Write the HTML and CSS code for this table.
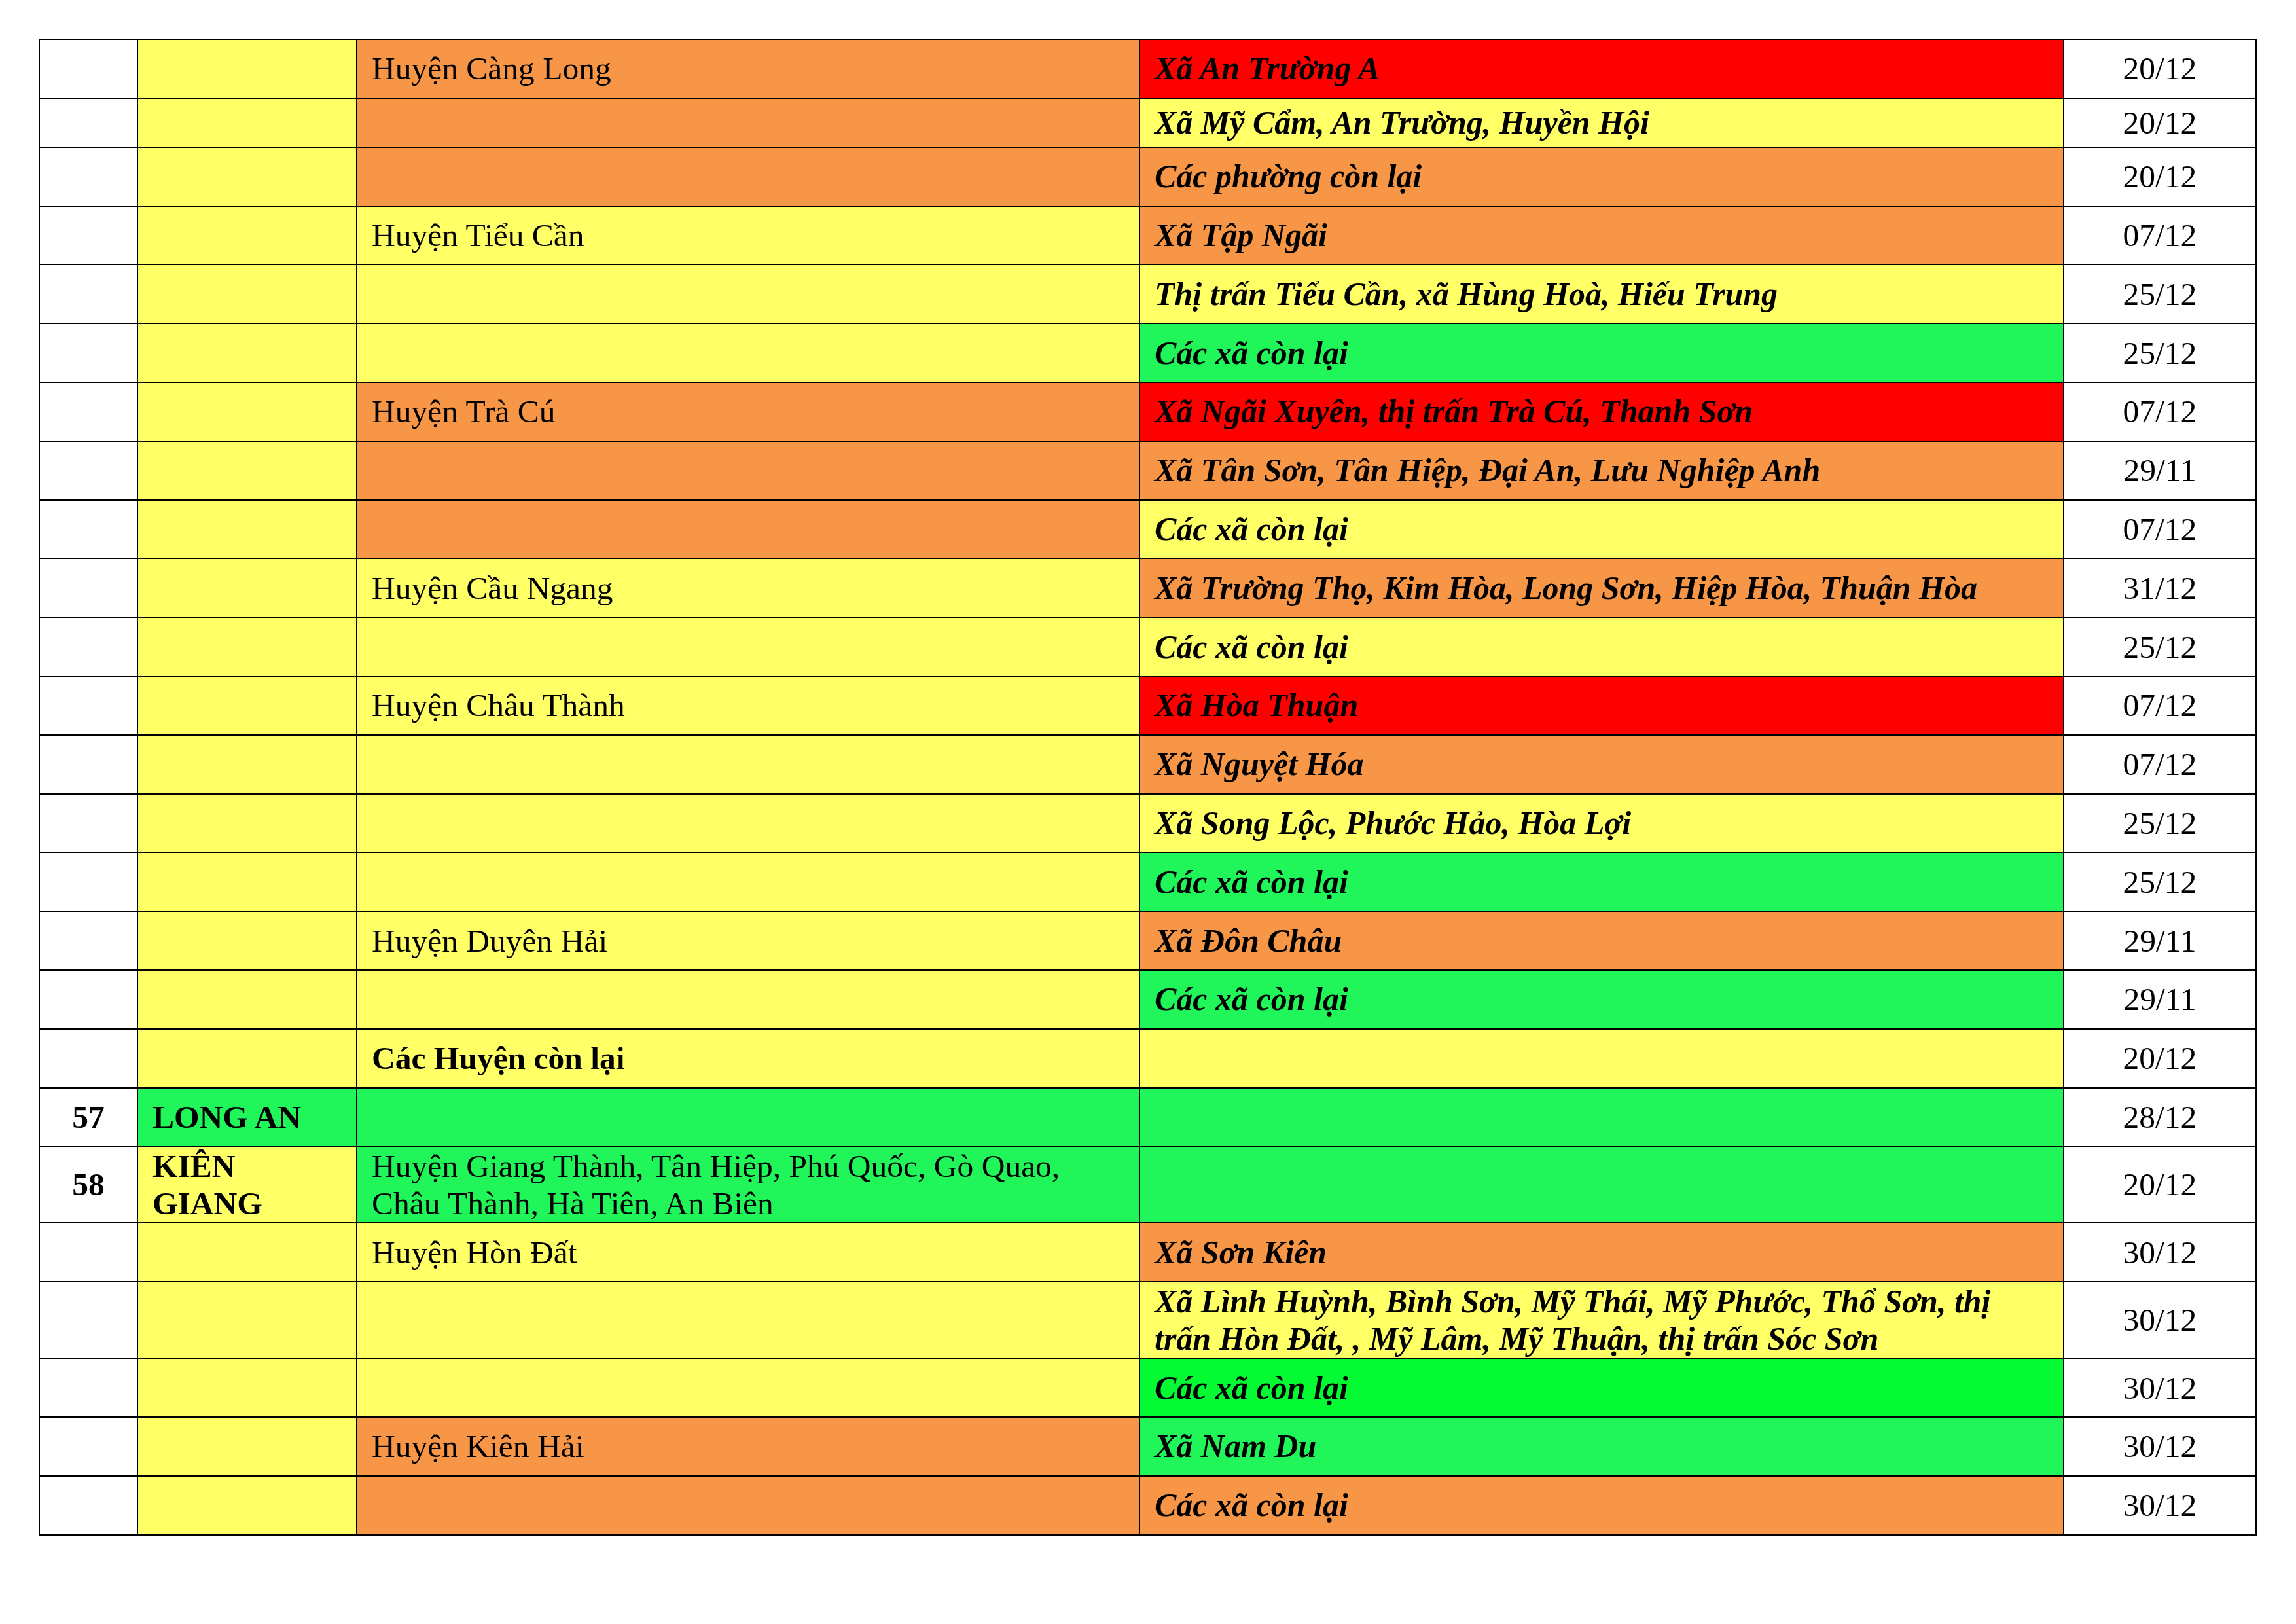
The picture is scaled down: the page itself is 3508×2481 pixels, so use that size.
FILE: index.html
```html
<!DOCTYPE html>
<html lang="vi">
<head>
<meta charset="utf-8">
<title>Bảng phân vùng</title>
<link rel="stylesheet" href="styles.css">
</head>
<body>
<table class="grid">
  <colgroup>
    <col class="c-stt"><col class="c-tinh"><col class="c-huyen"><col class="c-xa"><col class="c-ngay">
  </colgroup>
  <tbody>
    <tr><td></td><td class="y"></td><td class="o">Huyện Càng Long</td><td class="r bi">Xã An Trường A</td><td class="ctr">20/12</td></tr>
    <tr class="short"><td></td><td class="y"></td><td class="o"></td><td class="y bi">Xã Mỹ Cẩm, An Trường, Huyền Hội</td><td class="ctr">20/12</td></tr>
    <tr><td></td><td class="y"></td><td class="o"></td><td class="o bi">Các phường còn lại</td><td class="ctr">20/12</td></tr>
    <tr><td></td><td class="y"></td><td class="y">Huyện Tiểu Cần</td><td class="o bi">Xã Tập Ngãi</td><td class="ctr">07/12</td></tr>
    <tr><td></td><td class="y"></td><td class="y"></td><td class="y bi">Thị trấn Tiểu Cần, xã Hùng Hoà, Hiếu Trung</td><td class="ctr">25/12</td></tr>
    <tr><td></td><td class="y"></td><td class="y"></td><td class="g bi">Các xã còn lại</td><td class="ctr">25/12</td></tr>
    <tr><td></td><td class="y"></td><td class="o">Huyện Trà Cú</td><td class="r bi">Xã Ngãi Xuyên, thị trấn Trà Cú, Thanh Sơn</td><td class="ctr">07/12</td></tr>
    <tr><td></td><td class="y"></td><td class="o"></td><td class="o bi">Xã Tân Sơn, Tân Hiệp, Đại An, Lưu Nghiệp Anh</td><td class="ctr">29/11</td></tr>
    <tr><td></td><td class="y"></td><td class="o"></td><td class="y bi">Các xã còn lại</td><td class="ctr">07/12</td></tr>
    <tr><td></td><td class="y"></td><td class="y">Huyện Cầu Ngang</td><td class="o bi">Xã Trường Thọ, Kim Hòa, Long Sơn, Hiệp Hòa, Thuận Hòa</td><td class="ctr">31/12</td></tr>
    <tr><td></td><td class="y"></td><td class="y"></td><td class="y bi">Các xã còn lại</td><td class="ctr">25/12</td></tr>
    <tr><td></td><td class="y"></td><td class="y">Huyện Châu Thành</td><td class="r bi">Xã Hòa Thuận</td><td class="ctr">07/12</td></tr>
    <tr><td></td><td class="y"></td><td class="y"></td><td class="o bi">Xã Nguyệt Hóa</td><td class="ctr">07/12</td></tr>
    <tr><td></td><td class="y"></td><td class="y"></td><td class="y bi">Xã Song Lộc, Phước Hảo, Hòa Lợi</td><td class="ctr">25/12</td></tr>
    <tr><td></td><td class="y"></td><td class="y"></td><td class="g bi">Các xã còn lại</td><td class="ctr">25/12</td></tr>
    <tr><td></td><td class="y"></td><td class="y">Huyện Duyên Hải</td><td class="o bi">Xã Đôn Châu</td><td class="ctr">29/11</td></tr>
    <tr><td></td><td class="y"></td><td class="y"></td><td class="g bi">Các xã còn lại</td><td class="ctr">29/11</td></tr>
    <tr><td></td><td class="y"></td><td class="y b">Các Huyện còn lại</td><td class="y"></td><td class="ctr">20/12</td></tr>
    <tr><td class="ctr b">57</td><td class="g b">LONG AN</td><td class="g"></td><td class="g"></td><td class="ctr">28/12</td></tr>
    <tr class="tall"><td class="ctr b">58</td><td class="y b">KIÊN GIANG</td><td class="g">Huyện Giang Thành, Tân Hiệp, Phú Quốc, Gò Quao, Châu Thành, Hà Tiên, An Biên</td><td class="g"></td><td class="ctr">20/12</td></tr>
    <tr><td></td><td class="y"></td><td class="y">Huyện Hòn Đất</td><td class="o bi">Xã Sơn Kiên</td><td class="ctr">30/12</td></tr>
    <tr class="tall"><td></td><td class="y"></td><td class="y"></td><td class="y bi">Xã Lình Huỳnh, Bình Sơn, Mỹ Thái, Mỹ Phước, Thổ Sơn, thị trấn Hòn Đất, , Mỹ Lâm, Mỹ Thuận, thị trấn Sóc Sơn</td><td class="ctr">30/12</td></tr>
    <tr><td></td><td class="y"></td><td class="y"></td><td class="gb bi">Các xã còn lại</td><td class="ctr">30/12</td></tr>
    <tr><td></td><td class="y"></td><td class="o">Huyện Kiên Hải</td><td class="g bi">Xã Nam Du</td><td class="ctr">30/12</td></tr>
    <tr><td></td><td class="y"></td><td class="o"></td><td class="o bi">Các xã còn lại</td><td class="ctr">30/12</td></tr>
  </tbody>
</table>
</body>
</html>
```

FILE: styles.css
```css
html, body {
  margin: 0;
  padding: 0;
  background: #ffffff;
}

body {
  padding: 59px 0 0 59px;
  font-family: "Liberation Serif", "Times New Roman", serif;
  font-size: 49.5px;
  line-height: 57px;
  color: #000000;
}

.grid {
  border-collapse: collapse;
  table-layout: fixed;
  width: 3389px;
}

.c-stt { width: 150px; }
.c-tinh { width: 335px; }
.c-huyen { width: 1196px; }
.c-xa { width: 1412px; }
.c-ngay { width: 294px; }

.grid td {
  border: 2px solid #000000;
  padding: 0 22px;
  vertical-align: middle;
  background: #ffffff;
}

.grid tr { height: 89.8px; }
.grid tr.short { height: 75px; }
.grid tr.tall { height: 117px; }

.grid td.y { background: #ffff66; }
.grid td.o { background: #f79646; }
.grid td.r { background: #ff0000; }
.grid td.g { background: #20f55a; }
.grid td.gb { background: #04fb34; }

.ctr { text-align: center; }
.b { font-weight: bold; }
.bi {
  font-weight: bold;
  font-style: italic;
  font-size: 50px;
  padding-right: 40px;
}
```
